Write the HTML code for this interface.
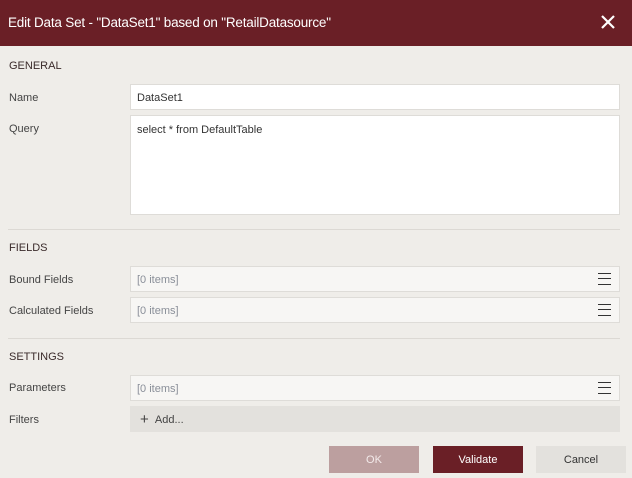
<!DOCTYPE html>
<html><head><style>
*{margin:0;padding:0;box-sizing:border-box}
body{width:632px;height:478px;background:#efede9;font-family:"Liberation Sans",sans-serif;font-size:11px;color:#333;position:relative;overflow:hidden}
.hdr{position:absolute;left:0;top:0;width:632px;height:46px;background:#6a1f26;color:#fff;font-size:13.5px;line-height:46px;padding-left:8px;letter-spacing:-0.2px}
.x{position:absolute;right:16px;top:14px}
.sec{position:absolute;left:9px;font-size:11px;color:#3a2a2a}
.lbl{position:absolute;left:9px;color:#444}
.inp{position:absolute;left:130px;width:490px;height:26px;background:#fff;border:1px solid #dedcd8;padding:0 0 0 6px;line-height:26px;color:#333}
.list{background:#f7f6f4;color:#8a8f99}
.ham{position:absolute;right:8px;top:6px;width:13px;height:12px;border-top:1px solid #333;border-bottom:1px solid #333}
.ham:after{content:"";position:absolute;left:0;right:0;top:4px;border-top:1px solid #333}
.sep{position:absolute;left:8px;width:612px;border-top:1px solid #dcd9d4}
.btn{position:absolute;top:446px;height:27px;width:90px;text-align:center;line-height:28px;font-size:11px}
</style></head><body>
<div class="hdr">Edit Data Set - "DataSet1" based on "RetailDatasource"
<svg class="x" width="16" height="16" viewBox="0 0 16 16"><path d="M2 2L14 14M14 2L2 14" stroke="#fff" stroke-width="2.2"/></svg></div>
<div class="sec" style="top:60px">GENERAL</div>
<div class="lbl" style="top:92px">Name</div>
<div class="inp" style="top:84px">DataSet1</div>
<div class="lbl" style="top:123px">Query</div>
<div class="inp" style="top:115px;height:100px;line-height:28px">select * from DefaultTable</div>
<div class="sep" style="top:229px"></div>
<div class="sec" style="top:242px">FIELDS</div>
<div class="lbl" style="top:274px">Bound Fields</div>
<div class="inp list" style="top:266px">[0 items]<div class="ham"></div></div>
<div class="lbl" style="top:305px">Calculated Fields</div>
<div class="inp list" style="top:297px">[0 items]<div class="ham"></div></div>
<div class="sep" style="top:338px"></div>
<div class="sec" style="top:351px">SETTINGS</div>
<div class="lbl" style="top:382px">Parameters</div>
<div class="inp list" style="top:375px">[0 items]<div class="ham"></div></div>
<div class="lbl" style="top:414px">Filters</div>
<div class="inp" style="top:406px;background:#e3e1dd;border-color:#e3e1dd;padding-left:9px;color:#444"><span style="font-size:15px;vertical-align:-1px">+</span>&nbsp;&nbsp;Add...</div>
<div class="btn" style="left:329px;background:#bc9f9f;color:#f3eaea">OK</div>
<div class="btn" style="left:433px;background:#6a1f26;color:#fff">Validate</div>
<div class="btn" style="left:536px;background:#e3e1dd;color:#333">Cancel</div>
</body></html>
